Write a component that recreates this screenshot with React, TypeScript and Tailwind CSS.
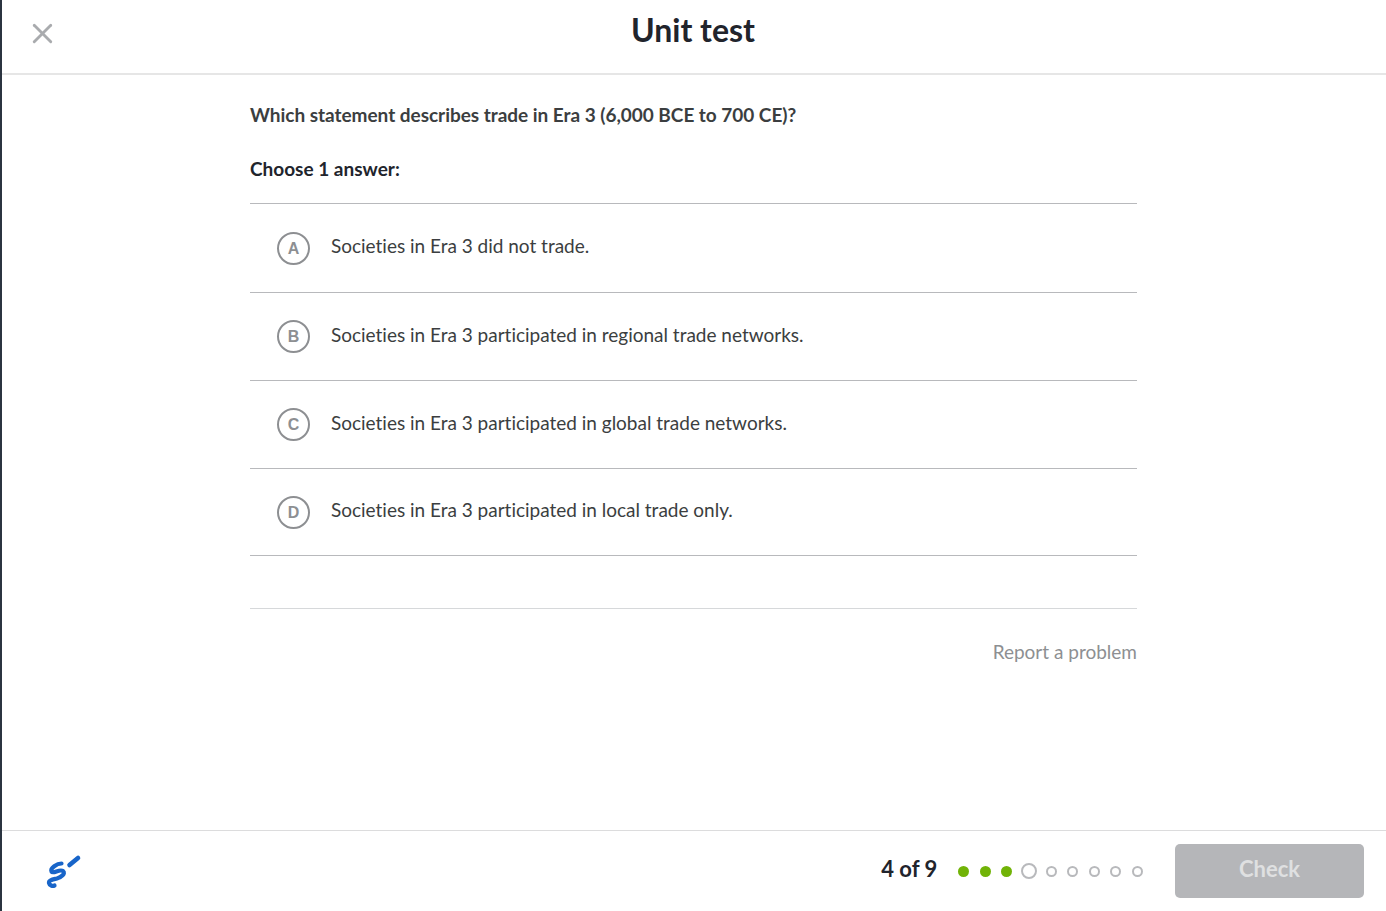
import { X } from "lucide-react";

const choices = [
  { letter: "A", rowClass: "h-[89px] pt-[1px]", textClass: "mt-[29px]", text: "Societies in Era 3 did not trade." },
  { letter: "B", rowClass: "h-[88px]", textClass: "mt-[30px]", text: "Societies in Era 3 participated in regional trade networks." },
  { letter: "C", rowClass: "h-[88px]", textClass: "mt-[30px]", text: "Societies in Era 3 participated in global trade networks." },
  { letter: "D", rowClass: "h-[87px]", textClass: "mt-[29px]", text: "Societies in Era 3 participated in local trade only." },
];

function ScribbleIcon() {
  return (
    <svg width="36" height="36" viewBox="0 0 36 36" fill="none" strokeLinecap="round" strokeLinejoin="round" className="shrink-0">
      <path d="M23.5 12 L32 5" stroke="#1865c9" strokeWidth="4.6" />
      <path
        d="M15.5 10.5 C11 10.5 4 15 5.5 18.5 C7 21.5 13.5 15.5 17 18 C20 20.5 15 24.5 11 25.5 C7 26.5 2.5 27 3 30 C3.5 32.5 6.5 33.5 8.5 32.5"
        stroke="#1865c9"
        strokeWidth="4.2"
      />
    </svg>
  );
}

export default function App() {
  return (
    <div className="h-[911px] w-[1386px] overflow-hidden flex bg-white font-['Lato','Noto_Sans',sans-serif] text-[#21242c]">
      {/* strip of the page behind the modal */}
      <div className="w-[2px] shrink-0 bg-[#2b3440]" />

      <div className="flex-1 flex flex-col min-w-0">
        <header className="h-[75px] shrink-0 flex items-center border-b-2 border-[#e6e6e6] relative">
          <X className="absolute left-[24px] top-[17px] text-[#a9abae]" size={33} strokeWidth={2.1} />
          <h1 className="w-full text-center text-[32px] font-bold leading-none pb-[14px] pr-[2px]">Unit test</h1>
        </header>

        <main className="flex-1 pl-[248px] pr-[249px]">
          <p className="mt-[28px] text-[19px] leading-[24px] font-bold text-[#3b3e40] tracking-[-0.03px]">
            Which statement describes trade in Era 3 (6,000 BCE to 700 CE)?
          </p>
          <p className="mt-[30px] text-[19px] leading-[24px] font-bold">Choose 1 answer:</p>

          <ul className="mt-[22px] border-t border-[#b8b9bc]">
            {choices.map((c) => (
              <li key={c.letter} className={`${c.rowClass} flex items-start pl-[27px] border-b border-[#b8b9bc]`}>
                <span className="mt-[27px] w-[33px] h-[33px] rounded-full border-2 border-[#8d8f92] flex items-center justify-center text-[#8d8f92] text-[16px] font-bold font-['Liberation_Sans',sans-serif]">
                  {c.letter}
                </span>
                <span className={`${c.textClass} ml-[21px] text-[19px] leading-[24px] text-[#3b3e40] tracking-[-0.01px]`}>{c.text}</span>
              </li>
            ))}
          </ul>

          <div className="mt-[52px] border-t border-[#d6d8da]" />
          <div className="mt-[31px] text-right text-[19px] leading-[24px] text-[#8d8f92]">Report a problem</div>
        </main>

        <footer className="h-[81px] shrink-0 border-t border-[#dcdcdd] flex items-center pl-[44px] pr-[22px]">
          <ScribbleIcon />
          <div className="ml-auto flex items-center">
            <span className="text-[22px] font-bold text-[#21242c] pb-[6px]">4 of 9</span>
            <div className="ml-[21px] flex items-center gap-[10.6px]">
              <span className="w-[11px] h-[11px] rounded-full bg-[#71b307]" />
              <span className="w-[11px] h-[11px] rounded-full bg-[#71b307]" />
              <span className="w-[11px] h-[11px] rounded-full bg-[#71b307]" />
              <span className="w-[16px] h-[16px] -mx-[2px] rounded-full border-2 border-[#b8b9bc]" />
              <span className="w-[11px] h-[11px] rounded-full border-2 border-[#b8b9bc]" />
              <span className="w-[11px] h-[11px] rounded-full border-2 border-[#b8b9bc]" />
              <span className="w-[11px] h-[11px] rounded-full border-2 border-[#b8b9bc]" />
              <span className="w-[11px] h-[11px] rounded-full border-2 border-[#b8b9bc]" />
              <span className="w-[11px] h-[11px] rounded-full border-2 border-[#b8b9bc]" />
            </div>
            <button className="ml-[32px] w-[189px] h-[54px] rounded-[5px] bg-[#b5b6b9] text-[#dfe0e1] text-[22px] font-bold pb-[5px]">
              Check
            </button>
          </div>
        </footer>
      </div>
    </div>
  );
}
